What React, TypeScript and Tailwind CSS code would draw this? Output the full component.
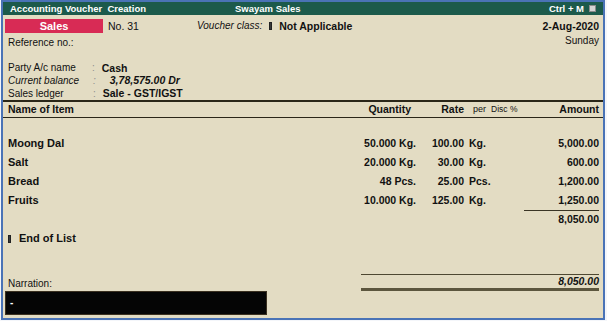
import React from "react";

const font = { fontFamily: '"Liberation Sans", Arial, sans-serif' };

const items = [
  { name: "Moong Dal", qty: "50.000 Kg.", rate: "100.00", per: "Kg.", amt: "5,000.00" },
  { name: "Salt", qty: "20.000 Kg.", rate: "30.00", per: "Kg.", amt: "600.00" },
  { name: "Bread", qty: "48 Pcs.", rate: "25.00", per: "Pcs.", amt: "1,200.00" },
  { name: "Fruits", qty: "10.000 Kg.", rate: "125.00", per: "Kg.", amt: "1,250.00" },
];

function Marker() {
  return <span className="inline-block w-[3px] h-[8px] bg-[#3a3a3a] border border-[#222]" />;
}

export default function App() {
  return (
    <div className="w-[607px] h-[321px] bg-[#f4f6fa] pl-[1px]" style={font}>
      <div className="w-[604px] h-[320px] border-2 border-[#4a73b6] bg-[#e3dcc3] flex flex-col text-[#111]">
        {/* title bar */}
        <div className="h-[13px] bg-[#1c5a4b] flex items-center text-white font-bold text-[9.5px] leading-none px-[7px]">
          <span className="w-[225px]">Accounting Voucher&nbsp;&nbsp;Creation</span>
          <span>Swayam Sales</span>
          <span className="ml-auto">Ctrl + M</span>
          <span className="ml-[5px] w-[7px] h-[7px] bg-[#d4d4d4] border border-[#8a8a8a]" />
        </div>

        {/* sales row */}
        <div className="mt-[4px] h-[14px] flex items-center">
          <div className="ml-[2px] w-[98px] h-[14px] bg-[#d82b55] text-white font-bold text-[11px] flex items-center justify-center leading-none">
            Sales
          </div>
          <span className="ml-[5px] w-[89px] text-[10.5px] leading-none">No. 31</span>
          <span className="italic text-[10px] leading-none">Voucher class:</span>
          <span className="ml-[7px] flex items-center"><Marker /></span>
          <span className="ml-[7px] font-bold text-[10.5px] leading-none">Not Applicable</span>
          <span className="ml-auto mr-[4px] font-bold text-[10.5px] leading-none">2-Aug-2020</span>
        </div>

        {/* reference row */}
        <div className="h-[16px] flex items-center pl-[5px] pr-[4px] text-[10px] leading-none">
          <span className="pt-[3px]">Reference no.:</span>
          <span className="ml-auto pb-[1px]">Sunday</span>
        </div>

        {/* party block */}
        <div className="mt-[13px] pl-[5px] text-[10px] leading-none">
          <div className="h-[12px] flex items-center">
            <span className="w-[84px]">Party A/c name</span>
            <span className="text-[#8e8e8e]">:</span>
            <span className="ml-[7px] font-bold text-[10.5px]">Cash</span>
          </div>
          <div className="h-[13px] flex items-center italic">
            <span className="w-[85px]">Current balance</span>
            <span className="text-[#8e8e8e]">:</span>
            <span className="ml-[14px] font-bold text-[10.5px]">3,78,575.00 Dr</span>
          </div>
          <div className="h-[13px] flex items-center">
            <span className="w-[85px]">Sales ledger</span>
            <span className="text-[#8e8e8e]">:</span>
            <span className="ml-[7px] font-bold text-[10.5px]">Sale - GST/IGST</span>
          </div>
        </div>

        {/* header */}
        <div className="border-t-2 border-b border-[#2a2618] h-[18px] flex items-center pl-[5px] pr-[4px] leading-none">
          <span className="flex-1 font-bold text-[10.5px]">Name of Item</span>
          <span className="w-[70px] text-right pr-[5px] font-bold text-[10.5px]">Quantity</span>
          <span className="w-[48px] text-right font-bold text-[10.5px]">Rate</span>
          <span className="w-[25px] pl-[9px] text-[9px]">per</span>
          <span className="w-[34px] pl-[2px] text-[8.5px]">Disc %</span>
          <span className="w-[76px] text-right font-bold text-[10.5px]">Amount</span>
        </div>

        {/* items */}
        <div className="mt-[16px] flex flex-col">
          {items.map((it) => (
            <div key={it.name} className="h-[19px] flex items-center pl-[5px] pr-[4px] font-bold text-[10.5px] leading-none">
              <span className="flex-1 text-[11px]">{it.name}</span>
              <span className="w-[70px] text-right">{it.qty}</span>
              <span className="w-[48px] text-right">{it.rate}</span>
              <span className="w-[25px] pl-[5px]">{it.per}</span>
              <span className="w-[34px]" />
              <span className="w-[76px] text-right">{it.amt}</span>
            </div>
          ))}
        </div>
        <div className="flex pr-[4px]">
          <div className="ml-auto w-[75px] border-t border-[#3a3525]" />
        </div>
        <div className="h-[17px] flex items-center justify-end pr-[4px] font-bold text-[10.5px] leading-none">
          8,050.00
        </div>

        {/* end of list */}
        <div className="mt-[4px] h-[13px] flex items-center pl-[5px] font-bold text-[11px] leading-none">
          <Marker />
          <span className="ml-[8px]">End of List</span>
        </div>

        <div className="flex-1" />

        {/* narration */}
        <div className="h-[17px] flex items-center pr-[4px]">
          <span className="pl-[5px] text-[10px] leading-none pt-[2px]">Narration:</span>
          <div className="ml-auto w-[238px] h-[17px] border-t border-[#4e4832] border-b-[3px] border-b-[#5c563e] flex items-center justify-end font-bold italic text-[10.5px] leading-none">
            8,050.00
          </div>
        </div>

        {/* black narration box */}
        <div className="ml-[2px] w-[262px] h-[24px] bg-[#050505] border border-[#3a3020] flex items-center pl-[4px] mb-[3px]">
          <span className="text-white font-bold text-[10px] leading-none">-</span>
        </div>
      </div>
    </div>
  );
}
